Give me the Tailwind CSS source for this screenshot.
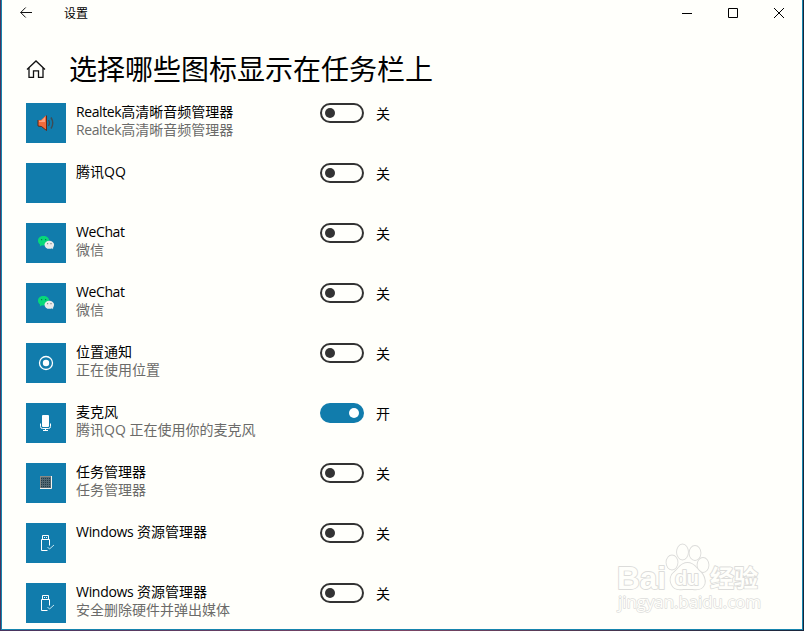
<!DOCTYPE html>
<html lang="zh-CN">

<head>
  <meta charset="UTF-8">
  <meta name="viewport" content="width=device-width, initial-scale=1.0">
  <title>设置</title>
  <script src="https://cdn.jsdelivr.net/npm/@tailwindcss/browser@4"></script>
</head>

<body class="overflow-hidden font-['Open_Sans','Noto_Sans_CJK_SC',sans-serif] text-black">
  <svg class="hidden">
    <symbol id="wechat" viewBox="0 0 18 18">
      <path d="M6.500 2C3.200 2 1 4 1 6.700c0 1.600.8 2.800 2 3.700l-.2 2.200 2.200-1.400c.6.2 1 .2 1.500.2 3.300 0 5.600-2 5.600-4.700S9.800 2 6.500 2z" fill="#07d879" />
      <ellipse cx="12.300" cy="10.800" rx="4.800" ry="4" fill="#e9ebeb" />
      <path d="M14 13l2 2.300.3-3z" fill="#e9ebeb" />
      <path d="M4 5h1.200v1.200H4zM8 5h1.200v1.200H8z" fill="#087a50" />
      <path d="M10 9h1.200v1.200H10zM13.400 9h1.200v1.200h-1.200z" fill="#888" />
    </symbol>
    <symbol id="usb" viewBox="0 0 18 18">
      <path d="M5.500 5.500v-4h6v4M10.500 16.500h-6v-11h8v6" fill="none" stroke="#fff" />
      <path d="M7 3h1v1H7zM9 3h1v1H9z" fill="#fff" />
      <path d="M10.500 13l2 2 4.500-4" fill="none" stroke="#c4e4ef" />
    </symbol>
  </svg>

  <div class="h-[631px] w-[804px] bg-linear-to-r from-[#47345f] from-0% via-[#7c4565] via-50% to-[#17263c] to-100% px-px pb-px">
    <div class="relative flex h-[630px] flex-col overflow-hidden border-x border-b border-[#1685ae] bg-[#fffffb]">
      <!-- title bar -->
      <div class="flex h-[26px] items-center pl-[18px]">
        <svg class="h-3 w-3" viewBox="0 0 12 12" fill="none" stroke="#111">
          <path d="M12 5.500H.7M5.700.5l-5 5 5 5" />
        </svg>
        <span class="mt-[2px] ml-8 text-xs">设置</span>
        <svg class="ml-auto h-[10px] w-[10px]" viewBox="0 0 10 10" stroke="#000">
          <path d="M0 5.500h10" />
        </svg>
        <svg class="ml-9 h-[10px] w-[10px]" viewBox="0 0 10 10" fill="none" stroke="#000">
          <path d="M.5.5h9v9h-9z" />
        </svg>
        <svg class="mr-[18px] ml-9 h-[10px] w-[10px]" viewBox="0 0 10 10" stroke="#000">
          <path d="M0 0l10 10M10 0L0 10" />
        </svg>
      </div>

      <!-- heading -->
      <div class="flex h-[77px] items-center pb-[3px] pl-6">
        <svg class="mt-[11px] h-[18px] w-5" viewBox="0 0 20 18" fill="none" stroke="#111" stroke-width="1.300">
          <path d="M1 9.500L10 1l9 8.500M3 8v9.300h4.500v-6.500h5v6.500H17V8" />
        </svg>
        <h1 class="mt-[11px] ml-[23px] text-[28px] leading-9">选择哪些图标显示在任务栏上</h1>
      </div>

      <!-- icon list -->
      <div class="flex flex-col gap-5 pl-6 text-sm">
        <div class="flex h-10">
          <div class="flex h-10 w-10 items-center justify-center bg-[#117cac]">
            <svg class="h-[18px] w-[18px]" viewBox="0 0 18 18">
              <path d="M1 6h3l5-4.500v15L4 12H1z" fill="#f26b3d" />
              <path d="M2 7h2l4-4v5H2z" fill="#ffa07c" />
              <path d="M9.500 1.500v15L4.500 12.500 1 12V6" fill="none" stroke="#602819" />
              <path d="M11.500 6q1.800 3 0 6M14 3.500q3.500 5.500 0 11" fill="none" stroke="#3d4c55" stroke-width="1.400" />
            </svg>
          </div>
          <div class="ml-[10px] w-[244px] leading-[18px]">
            <p><span class="tracking-[-0.4px]">Realtek</span>高清晰音频管理器</p>
            <p class="text-[#6b6b69]"><span class="tracking-[-0.4px]">Realtek</span>高清晰音频管理器</p>
          </div>
          <div class="flex h-5 w-11 items-center rounded-full border-2 border-[#333] pl-[3px]">
            <div class="h-[10px] w-[10px] rounded-full bg-[#333]"></div>
          </div>
          <span class="ml-3 leading-[22px]">关</span>
        </div>

        <div class="flex h-10">
          <div class="h-10 w-10 bg-[#117cac]"></div>
          <div class="ml-[10px] w-[244px] leading-[18px]">
            <p>腾讯QQ</p>
          </div>
          <div class="flex h-5 w-11 items-center rounded-full border-2 border-[#333] pl-[3px]">
            <div class="h-[10px] w-[10px] rounded-full bg-[#333]"></div>
          </div>
          <span class="ml-3 leading-[22px]">关</span>
        </div>

        <div class="flex h-10">
          <div class="flex h-10 w-10 items-center justify-center bg-[#117cac]">
            <svg class="h-[18px] w-[18px]"><use href="#wechat" /></svg>
          </div>
          <div class="ml-[10px] w-[244px] leading-[18px]">
            <p class="tracking-[-0.4px]">WeChat</p>
            <p class="text-[#6b6b69]">微信</p>
          </div>
          <div class="flex h-5 w-11 items-center rounded-full border-2 border-[#333] pl-[3px]">
            <div class="h-[10px] w-[10px] rounded-full bg-[#333]"></div>
          </div>
          <span class="ml-3 leading-[22px]">关</span>
        </div>

        <div class="flex h-10">
          <div class="flex h-10 w-10 items-center justify-center bg-[#117cac]">
            <svg class="h-[18px] w-[18px]"><use href="#wechat" /></svg>
          </div>
          <div class="ml-[10px] w-[244px] leading-[18px]">
            <p class="tracking-[-0.4px]">WeChat</p>
            <p class="text-[#6b6b69]">微信</p>
          </div>
          <div class="flex h-5 w-11 items-center rounded-full border-2 border-[#333] pl-[3px]">
            <div class="h-[10px] w-[10px] rounded-full bg-[#333]"></div>
          </div>
          <span class="ml-3 leading-[22px]">关</span>
        </div>

        <div class="flex h-10">
          <div class="flex h-10 w-10 items-center justify-center bg-[#117cac]">
            <svg class="h-4 w-4" viewBox="0 0 16 16">
              <circle cx="8" cy="8" r="6.500" fill="none" stroke="#fff" stroke-width="1.300" />
              <circle cx="8" cy="8" r="3.200" fill="#fff" />
            </svg>
          </div>
          <div class="ml-[10px] w-[244px] leading-[18px]">
            <p>位置通知</p>
            <p class="text-[#6b6b69]">正在使用位置</p>
          </div>
          <div class="flex h-5 w-11 items-center rounded-full border-2 border-[#333] pl-[3px]">
            <div class="h-[10px] w-[10px] rounded-full bg-[#333]"></div>
          </div>
          <span class="ml-3 leading-[22px]">关</span>
        </div>

        <div class="flex h-10">
          <div class="flex h-10 w-10 items-center justify-center bg-[#117cac]">
            <svg class="h-4 w-4" viewBox="0 0 16 16">
              <rect x="4" y="0" width="7" height="12" rx="1" fill="#fff" />
              <path d="M2.500 8.500v3q0 2 2 2h6q2 0 2-2v-3M7.500 13.500v2M5 15.500h5" fill="none" stroke="#fff" />
            </svg>
          </div>
          <div class="ml-[10px] w-[244px] leading-[18px]">
            <p>麦克风</p>
            <p class="text-[#6b6b69]">腾讯QQ 正在使用你的麦克风</p>
          </div>
          <div class="flex h-5 w-11 items-center justify-end rounded-full bg-[#117cac] pr-[5px]">
            <div class="h-[10px] w-[10px] rounded-full bg-white"></div>
          </div>
          <span class="ml-3 leading-[22px]">开</span>
        </div>

        <div class="flex h-10">
          <div class="flex h-10 w-10 items-center justify-center bg-[#117cac]">
            <svg class="h-[14px] w-3" viewBox="0 0 12 14">
              <path d="M0 0h12v13H0z" fill="#526873" />
              <path d="M1 2.500h10M1 4.500h10M1 6.500h10M1 8.500h10M1 10.500h10" stroke="#233b48" stroke-dasharray="1 1" />
              <path d="M0 .5h12M.5 0v13" stroke="#8b8b86" />
              <path d="M11.500 0v12.500H0" fill="none" stroke="#f4f4f0" />
            </svg>
          </div>
          <div class="ml-[10px] w-[244px] leading-[18px]">
            <p>任务管理器</p>
            <p class="text-[#6b6b69]">任务管理器</p>
          </div>
          <div class="flex h-5 w-11 items-center rounded-full border-2 border-[#333] pl-[3px]">
            <div class="h-[10px] w-[10px] rounded-full bg-[#333]"></div>
          </div>
          <span class="ml-3 leading-[22px]">关</span>
        </div>

        <div class="flex h-10">
          <div class="flex h-10 w-10 items-center justify-center bg-[#117cac]">
            <svg class="h-[18px] w-[18px]"><use href="#usb" /></svg>
          </div>
          <div class="ml-[10px] w-[244px] leading-[18px]">
            <p><span class="tracking-[-0.3px]">Windows</span> 资源管理器</p>
          </div>
          <div class="flex h-5 w-11 items-center rounded-full border-2 border-[#333] pl-[3px]">
            <div class="h-[10px] w-[10px] rounded-full bg-[#333]"></div>
          </div>
          <span class="ml-3 leading-[22px]">关</span>
        </div>

        <div class="flex h-10">
          <div class="flex h-10 w-10 items-center justify-center bg-[#117cac]">
            <svg class="h-[18px] w-[18px]"><use href="#usb" /></svg>
          </div>
          <div class="ml-[10px] w-[244px] leading-[18px]">
            <p><span class="tracking-[-0.3px]">Windows</span> 资源管理器</p>
            <p class="text-[#6b6b69]">安全删除硬件并弹出媒体</p>
          </div>
          <div class="flex h-5 w-11 items-center rounded-full border-2 border-[#333] pl-[3px]">
            <div class="h-[10px] w-[10px] rounded-full bg-[#333]"></div>
          </div>
          <span class="ml-3 leading-[22px]">关</span>
        </div>
      </div>

      <!-- watermark -->
      <svg class="absolute right-[36px] bottom-[13px] h-[76px] w-[152px]" viewBox="0 0 152 76" fill="#fffffb" stroke="#dcdcda" stroke-width="1.800" stroke-linejoin="round" paint-order="stroke">
        <ellipse cx="58" cy="22.500" rx="5.500" ry="7" />
        <ellipse cx="68.500" cy="12" rx="5.500" ry="7.500" />
        <ellipse cx="81" cy="13" rx="5.500" ry="7" />
        <ellipse cx="89" cy="25" rx="5.500" ry="7" />
        <path d="M73.500 23c-7 0-9 6-13 9-4 3-5 8-3 12 2 5 7 6 12 5h9c6 1 10 0 12-5 1-4-1-9-4-12-4-3-6-9-13-9z" />
        <text x="3" y="49" font-family="Liberation Sans" font-weight="bold" font-size="31" textLength="49" lengthAdjust="spacingAndGlyphs">Bai</text>
        <text x="61" y="45" font-family="Liberation Sans" font-weight="bold" font-size="20" textLength="24">du</text>
        <text x="96" y="47" font-family="Noto Sans CJK SC" font-weight="bold" font-size="24" textLength="48">经验</text>
        <text x="4" y="68" stroke-width="1.300" font-family="Open Sans" font-size="16" textLength="143" lengthAdjust="spacingAndGlyphs">jingyan.baidu.com</text>
      </svg>
    </div>
  </div>
</body>

</html>
